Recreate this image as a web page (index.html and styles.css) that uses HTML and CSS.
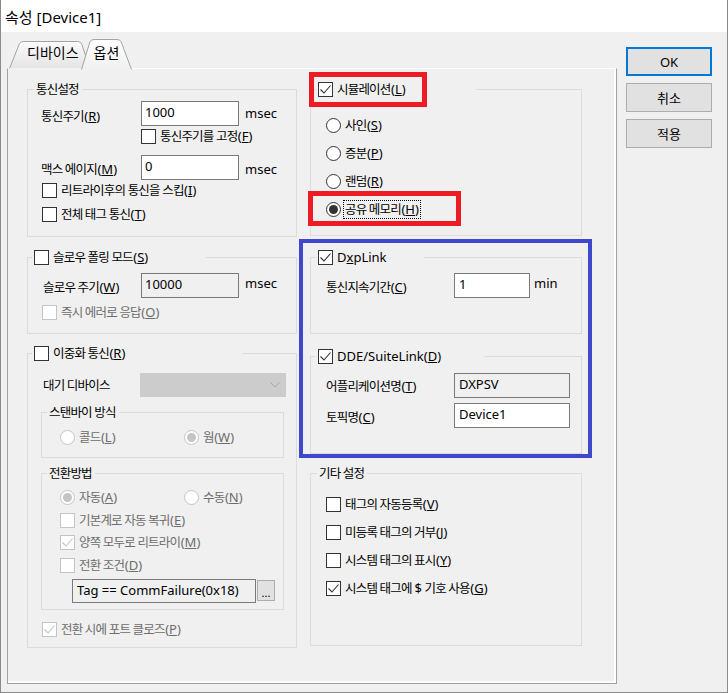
FILE: index.html
```html
<!DOCTYPE html>
<html lang="ko">
<head>
  <meta charset="UTF-8">
  <title>속성 [Device1]</title>
  <link rel="stylesheet" href="styles.css">
</head>
<body>
<div class="window">
  <div class="titlebar">속성 [Device1]</div>
  <div class="client">
    <div class="sheet">
      <div class="tabstrip">
        <svg class="tabshapes" width="140" height="38" viewBox="0 0 140 38">
          <defs>
            <linearGradient id="tg1" x1="0" y1="0" x2="0" y2="1">
              <stop offset="0" stop-color="#fbfbfb"/>
              <stop offset="1" stop-color="#e4e4e4"/>
            </linearGradient>
            <linearGradient id="tg2" x1="0" y1="0" x2="0" y2="1">
              <stop offset="0" stop-color="#ffffff"/>
              <stop offset="1" stop-color="#f0f0f0"/>
            </linearGradient>
          </defs>
          <path d="M2.5 36.5 L12.5 11.5 Q14 9.5 16.5 9.5 L70.5 9.5 Q73 9.5 74.5 11.5 L83 36.5" fill="url(#tg1)" stroke="#a3a3a3"/>
          <path d="M74.5 37.5 L83 9.5 Q84.5 7.5 87 7.5 L110 7.5 Q112.5 7.5 114 9.5 L124.5 37.5" fill="url(#tg2)" stroke="#a3a3a3"/>
        </svg>
        <span class="tab t1">디바이스</span>
        <span class="tab t2">옵션</span>
      </div>

      <div class="panel">
        <!-- 왼쪽 -->
        <div class="col l">
          <fieldset class="grp pb14">
            <legend>통신설정</legend>
            <div class="row h25 mt3 pl13">
              <span class="lbl w100 lo5">통신주기<span class="mn">(<u>R</u>)</span></span>
              <input class="tb w98" type="text" value="1000">
              <span class="unit">msec</span>
            </div>
            <div class="row h15 mt3 pl113">
              <span class="ctl"><span class="cb"></span><span>통신주기를 고정<span class="mn">(<u>F</u>)</span></span></span>
            </div>
            <div class="row h25 mt11 pl13">
              <span class="lbl w100 lo3">맥스 에이지<span class="mn">(<u>M</u>)</span></span>
              <input class="tb w98" type="text" value="0">
              <span class="unit dn">msec</span>
            </div>
            <div class="row h15 mt3 pl14">
              <span class="ctl"><span class="cb"></span><span>리트라이후의 통신을 스킵<span class="mn">(<u>I</u>)</span></span></span>
            </div>
            <div class="row h15 mt9 pl14">
              <span class="ctl"><span class="cb"></span><span>전체 태그 통신<span class="mn">(<u>T</u>)</span></span></span>
            </div>
          </fieldset>

          <fieldset class="grp mt12 pb13">
            <legend class="chk slow"><span class="cb"></span><span>슬로우 폴링 모드<span class="mn">(<u>S</u>)</span></span></legend>
            <div class="row h25 mt7 pl15">
              <span class="lbl w98 lo3">슬로우 주기<span class="mn">(<u>W</u>)</span></span>
              <input class="tb w98 ro" type="text" value="10000" readonly>
              <span class="unit up">msec</span>
            </div>
            <div class="row h15 mt7 pl14 dis">
              <span class="ctl"><span class="cb"></span><span>즉시 에러로 응답<span class="mn">(<u>O</u>)</span></span></span>
            </div>
          </fieldset>

          <fieldset class="grp mt11 pb10">
            <legend class="chk dual"><span class="cb"></span><span>이중화 통신<span class="mn">(<u>R</u>)</span></span></legend>
            <div class="row h24 mt11 pl15">
              <span class="lbl w97">대기 디바이스</span>
              <div class="combo">
                <svg width="10" height="6" viewBox="0 0 10 6"><path d="M.5 .5 5 5 9.5 .5" fill="none" stroke="#a6a6a6"/></svg>
              </div>
            </div>

            <fieldset class="grp sub mt7 pb12">
              <legend>스탠바이 방식</legend>
              <div class="row h15 mt9 pl18 dis">
                <span class="ctl w124"><span class="rb"></span><span>콜드<span class="mn">(<u>L</u>)</span></span></span>
                <span class="ctl"><span class="rb on"></span><span>웜<span class="mn">(<u>W</u>)</span></span></span>
              </div>
            </fieldset>

            <fieldset class="grp sub mt7 pb6">
              <legend>전환방법</legend>
              <div class="row h15 mt8 pl18 dis">
                <span class="ctl w124"><span class="rb on"></span><span>자동<span class="mn">(<u>A</u>)</span></span></span>
                <span class="ctl"><span class="rb"></span><span>수동<span class="mn">(<u>N</u>)</span></span></span>
              </div>
              <div class="row h15 mt8 pl18 dis">
                <span class="ctl"><span class="cb"></span><span>기본계로 자동 복귀<span class="mn">(<u>E</u>)</span></span></span>
              </div>
              <div class="row h15 mt7 pl18 dis">
                <span class="ctl"><span class="cb"><svg viewBox="0 0 13 13"><path d="M1.5 6.5 5 10 11.5 2.5"/></svg></span><span>양쪽 모두로 리트라이<span class="mn">(<u>M</u>)</span></span></span>
              </div>
              <div class="row h15 mt8 pl18 dis">
                <span class="ctl"><span class="cb"></span><span>전환 조건<span class="mn">(<u>D</u>)</span></span></span>
              </div>
              <div class="row h24 mt6 pl30 cond">
                <input class="tb w184 ro" type="text" value="Tag == CommFailure(0x18)" readonly>
                <span class="dots">...</span>
              </div>
            </fieldset>

            <div class="row h15 mt12 pl14 dis">
              <span class="ctl"><span class="cb"><svg viewBox="0 0 13 13"><path d="M1.5 6.5 5 10 11.5 2.5"/></svg></span><span>전환 시에 포트 클로즈<span class="mn">(<u>P</u>)</span></span></span>
            </div>
          </fieldset>
        </div>

        <!-- 오른쪽 -->
        <div class="col r">
          <fieldset class="grp pb18">
            <legend class="chk sim"><span class="cb"><svg viewBox="0 0 13 13"><path d="M1.5 6.5 5 10 11.5 2.5"/></svg></span><span>시뮬레이션<span class="mn">(<u>L</u>)</span></span></legend>
            <div class="row h15 mt20 pl15">
              <span class="ctl"><span class="rb"></span><span>사인<span class="mn">(<u>S</u>)</span></span></span>
            </div>
            <div class="row h15 mt13 pl15">
              <span class="ctl"><span class="rb"></span><span>증분<span class="mn">(<u>P</u>)</span></span></span>
            </div>
            <div class="row h15 mt13 pl15">
              <span class="ctl"><span class="rb"></span><span>랜덤<span class="mn">(<u>R</u>)</span></span></span>
            </div>
            <div class="row h15 mt13 pl15">
              <span class="ctl fc"><span class="rb on"></span><span class="focus">공유 메모리<span class="mn">(<u>H</u>)</span></span></span>
            </div>
          </fieldset>

          <fieldset class="grp mt13 pb35">
            <legend class="chk dxp"><span class="cb"><svg viewBox="0 0 13 13"><path d="M1.5 6.5 5 10 11.5 2.5"/></svg></span><span class="en">D<u>x</u>pLink</span></legend>
            <div class="row h25 mt7 pl15">
              <span class="lbl w128 lo3">통신지속기간<span class="mn">(<u>C</u>)</span></span>
              <input class="tb w76" type="text" value="1">
              <span class="unit up min">min</span>
            </div>
          </fieldset>

          <fieldset class="grp mt14 pb25">
            <legend class="chk dde"><span class="cb"><svg viewBox="0 0 13 13"><path d="M1.5 6.5 5 10 11.5 2.5"/></svg></span><span class="en">DDE/SuiteLink(<u>D</u>)</span></legend>
            <div class="row h25 mt8 pl15">
              <span class="lbl w128 lo2">어플리케이션명<span class="mn">(<u>T</u>)</span></span>
              <input class="tb w116 ro" type="text" value="DXPSV" readonly>
            </div>
            <div class="row h25 mt5 pl15">
              <span class="lbl w128 lo3">토픽명<span class="mn">(<u>C</u>)</span></span>
              <input class="tb w116" type="text" value="Device1">
            </div>
          </fieldset>

          <fieldset class="grp mt11 pb49">
            <legend>기타 설정</legend>
            <div class="row h15 mt15 pl15">
              <span class="ctl"><span class="cb"></span><span>태그의 자동등록<span class="mn">(<u>V</u>)</span></span></span>
            </div>
            <div class="row h15 mt13 pl15">
              <span class="ctl"><span class="cb"></span><span>미등록 태그의 거부<span class="mn">(<u>J</u>)</span></span></span>
            </div>
            <div class="row h15 mt13 pl15">
              <span class="ctl"><span class="cb"></span><span>시스템 태그의 표시<span class="mn">(<u>Y</u>)</span></span></span>
            </div>
            <div class="row h15 mt13 pl15">
              <span class="ctl"><span class="cb"><svg viewBox="0 0 13 13"><path d="M1.5 6.5 5 10 11.5 2.5"/></svg></span><span>시스템 태그에 <span class="mn">$</span> 기호 사용<span class="mn">(<u>G</u>)</span></span></span>
            </div>
          </fieldset>
        </div>

        <!-- 표시 상자 -->
        <div class="mark red m-sim"></div>
        <div class="mark red m-shm"></div>
        <div class="mark blue m-link"></div>
      </div>
    </div>

    <div class="btns">
      <div class="btn def">OK</div>
      <div class="btn">취소</div>
      <div class="btn">적용</div>
    </div>
  </div>
</div>
</body>
</html>
```

FILE: styles.css
```css
body {
  margin: 0;
  background: #f0f0f0;
  font-family: "Noto Sans", "Noto Sans CJK KR", sans-serif;
  font-size: 12px;
  color: #000;
}
.window {
  width: 728px;
  height: 693px;
  box-sizing: border-box;
  border: 1px solid #8a8a8a;
  border-top: none;
  overflow: hidden;
}
.titlebar {
  height: 32px;
  background: #fff;
  display: flex;
  align-items: center;
  padding-left: 4px;
  font-size: 15px;
}
.client {
  display: flex;
}
.sheet {
  margin-left: 6px;
  width: 610px;
}

/* 탭 */
.tabstrip {
  position: relative;
  height: 36px;
  box-sizing: border-box;
  padding-top: 12px;
  display: flex;
  align-items: flex-start;
}
.tabshapes {
  position: absolute;
  left: 0;
  top: 0;
  z-index: 1;
}
.tab {
  position: relative;
  z-index: 2;
  font-size: 14px;
  line-height: 17px;
}
.t1 { margin-left: 20px; }
.t2 { margin-left: 15px; }

.panel {
  position: relative;
  height: 616px;
  box-sizing: border-box;
  border: 1px solid #a0a0a0;
  border-top-color: #fff;
  box-shadow: inset -2px -2px 0 #fff;
  padding: 12px 0 0 19px;
  display: flex;
  gap: 13px;
}
.col {
  display: flex;
  flex-direction: column;
}
.col.l { width: 270px; }
.col.r { width: 272px; }

/* 그룹 */
.grp {
  margin: 0;
  padding: 0;
  min-width: 0;
  border: 1px solid #dcdcdc;
  box-sizing: border-box;
  font-size: 12.5px;
  letter-spacing: -0.8px;
}
.grp > legend {
  height: 17px;
  line-height: 17px;
  box-sizing: border-box;
  padding: 0 3px 0 2px;
  margin-left: 6px;
}
.grp > legend.chk {
  display: flex;
  align-items: center;
  gap: 4px;
  padding: 0 2px;
  margin-left: 4px;
}
.col.r .grp > legend.chk { margin-left: 5px; }
legend.slow { width: 174px; }
legend.dual { width: 210px; }
legend.sim { width: 160px; }
legend.dxp { width: 108px; }
legend.dde { width: 168px; }
.grp.sub {
  width: 243px;
  margin-left: 13px;
}
.grp.sub > legend { margin-left: 5px; }

.row {
  display: flex;
  align-items: center;
}
.h15 { height: 15px; }
.h24 { height: 24px; }
.h25 { height: 25px; }
.mt3 { margin-top: 3px; }
.mt5 { margin-top: 5px; }
.mt6 { margin-top: 6px; }
.mt7 { margin-top: 7px; }
.mt8 { margin-top: 8px; }
.mt9 { margin-top: 9px; }
.mt11 { margin-top: 11px; }
.mt12 { margin-top: 12px; }
.mt13 { margin-top: 13px; }
.mt14 { margin-top: 14px; }
.mt15 { margin-top: 15px; }
.mt20 { margin-top: 20px; }
.pl13 { padding-left: 13px; }
.pl14 { padding-left: 14px; }
.pl15 { padding-left: 15px; }
.pl18 { padding-left: 18px; }
.pl30 { padding-left: 30px; }
.pl113 { padding-left: 113px; }
.pb6 { padding-bottom: 6px; }
.pb10 { padding-bottom: 10px; }
.pb12 { padding-bottom: 12px; }
.pb13 { padding-bottom: 13px; }
.pb14 { padding-bottom: 14px; }
.pb18 { padding-bottom: 18px; }
.pb25 { padding-bottom: 25px; }
.pb35 { padding-bottom: 35px; }
.pb49 { padding-bottom: 49px; }

.lbl {
  line-height: 15px;
  flex: none;
}
.lo2 { padding-top: 2px; }
.lo3 { padding-top: 3px; }
.lo5 { padding-top: 5px; }
.w97 { width: 97px; }
.w98 { width: 98px; }
.w100 { width: 100px; }
.w124 { width: 124px; }
.w128 { width: 128px; }

/* 영문 부분: 자간 없이 조금 크게 */
.en, .unit, .mn {
  font-size: 13px;
  letter-spacing: 0;
}
.mn { margin-left: 0.5px; }
.unit {
  margin-left: 6px;
  line-height: 15px;
}
.unit.min { margin-left: 4px; }
.unit.up { padding-bottom: 5px; }
.unit.dn { padding-top: 4px; }

/* 입력 */
.tb {
  height: 25px;
  box-sizing: border-box;
  border: 1px solid #7a7a7a;
  background: #fff;
  padding: 0 3px 3px;
  margin: 0;
  font-family: "Noto Sans", sans-serif;
  font-size: 13px;
  letter-spacing: 0;
  color: #000;
  outline: none;
}
.tb.ro { background: #f0f0f0; }
.tb.w76 { width: 76px; padding-left: 4px; }
.tb.w98 { width: 98px; }
.tb.w116 { width: 116px; padding-left: 4px; }
.tb.w184 { width: 184px; height: 24px; padding-left: 4px; }
.cond { align-items: flex-start; }
.dots {
  width: 18px;
  height: 21px;
  margin: 1px 0 0 1px;
  box-sizing: border-box;
  border: 1px solid #adadad;
  background: #e1e1e1;
  font-size: 11px;
  letter-spacing: 0;
  line-height: 24px;
  text-align: center;
}
.combo {
  width: 146px;
  height: 24px;
  box-sizing: border-box;
  background: #cccccc;
  border: 1px solid #cccccc;
  display: flex;
  align-items: center;
  justify-content: flex-end;
  padding-right: 5px;
}

/* 체크박스, 라디오 */
.ctl {
  display: flex;
  align-items: center;
  gap: 4px;
  line-height: 15px;
}
.ctl.fc { gap: 3px; }
.cb {
  width: 15px;
  height: 15px;
  flex: none;
  box-sizing: border-box;
  border: 1px solid #333;
  background: #fff;
}
.cb svg {
  display: block;
  width: 13px;
  height: 13px;
}
.cb path {
  fill: none;
  stroke: #333;
  stroke-width: 1.1;
}
.rb {
  width: 15px;
  height: 15px;
  flex: none;
  box-sizing: border-box;
  border: 1px solid #333;
  border-radius: 50%;
  background: #fff;
  display: flex;
  align-items: center;
  justify-content: center;
}
.rb.on::after {
  content: "";
  width: 9px;
  height: 9px;
  border-radius: 50%;
  background: #333;
}
.dis { color: #6d6d6d; }
.dis .cb, .dis .rb { border-color: #c4c4c4; }
.dis .cb path { stroke: #c4c4c4; }
.dis .rb.on::after { background: #c4c4c4; }
.focus {
  padding: 1px;
  outline: 1px dotted #000;
}

/* 표시 상자 */
.mark {
  position: absolute;
  box-sizing: border-box;
  pointer-events: none;
}
.red { border: 5px solid #ed1c24; }
.blue { border: 4px solid #3f48cc; }
.m-sim { left: 301px; top: 3px; width: 118px; height: 35px; }
.m-shm { left: 300px; top: 122px; width: 153px; height: 35px; }
.m-link { left: 291px; top: 170px; width: 293px; height: 219px; }

/* 버튼 */
.btns {
  margin-left: 9px;
  padding-top: 15px;
  display: flex;
  flex-direction: column;
  gap: 7px;
}
.btn {
  width: 86px;
  height: 29px;
  box-sizing: border-box;
  border: 1px solid #adadad;
  background: #e1e1e1;
  display: flex;
  align-items: center;
  justify-content: center;
  font-size: 13px;
}
.btn.def {
  border: 2px solid #0078d7;
}
```
